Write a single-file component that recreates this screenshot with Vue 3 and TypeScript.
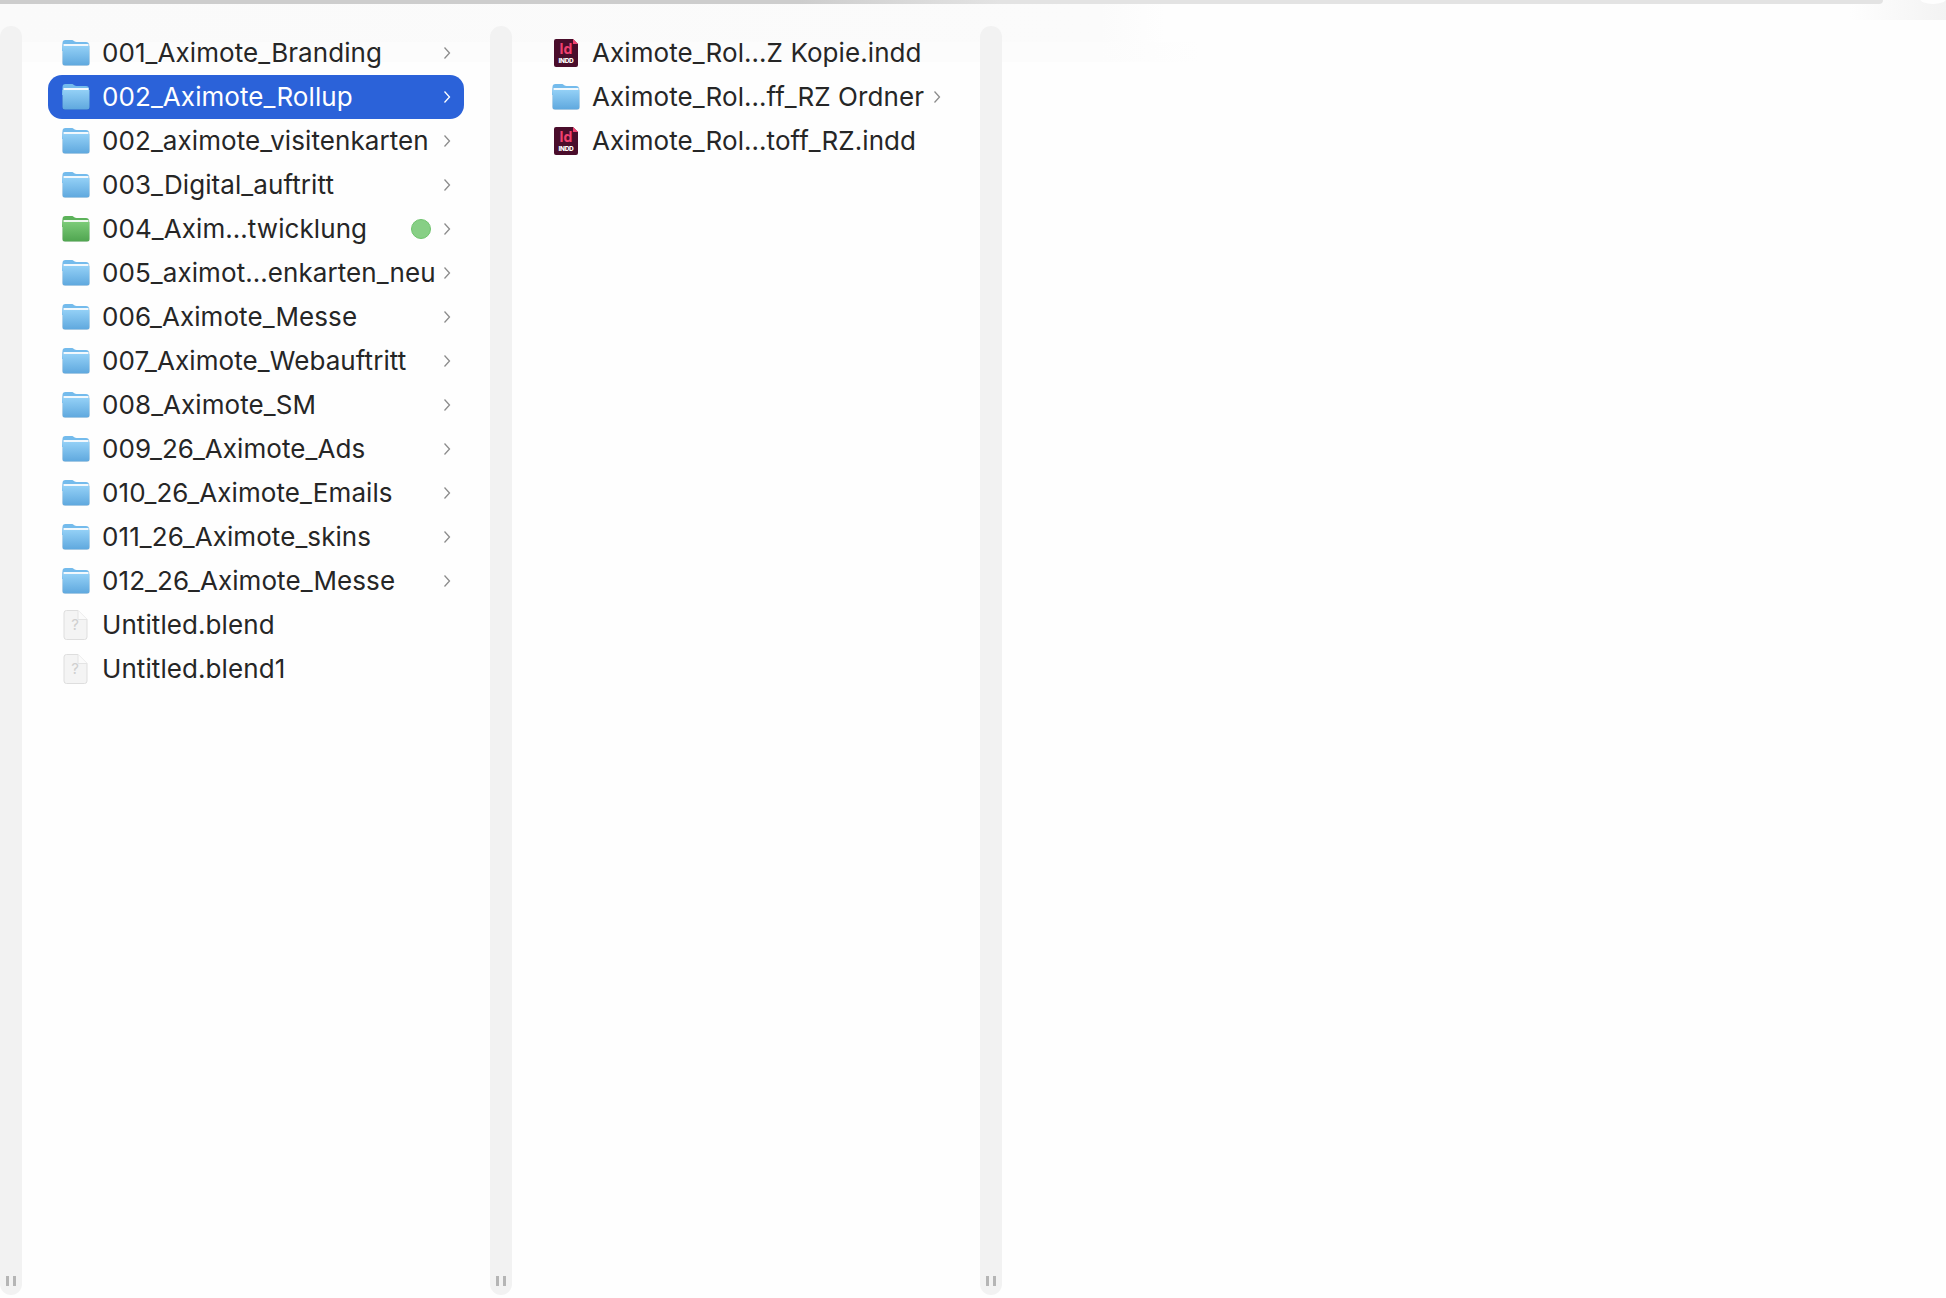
<template>
  <div class="finder">
    <div class="top-edge" />
    <div class="top-corner" />
    <div class="columns">
      <section v-for="(col, i) in columns" :key="i" class="column">
        <div class="gutter">
          <span class="grip" />
          <span class="grip" />
        </div>
        <ul class="list">
          <li v-for="item in col" :key="item.name" class="row" :class="{ selected: item.selected }">
            <span class="icon">
              <svg v-if="item.kind === 'folder' || item.kind === 'green'" width="30" height="28" viewBox="0 0 30 28">
                <defs>
                  <linearGradient id="blueBody" x1="0" y1="0" x2="0" y2="1">
                    <stop offset="0" stop-color="#93d0f6" />
                    <stop offset="1" stop-color="#5fa8de" />
                  </linearGradient>
                  <linearGradient id="greenBody" x1="0" y1="0" x2="0" y2="1">
                    <stop offset="0" stop-color="#7ccb78" />
                    <stop offset="1" stop-color="#4fa550" />
                  </linearGradient>
                </defs>
                <rect x="1" y="4" width="28" height="23" rx="3" fill="#000" opacity="0.08" />
                <path
                  d="M1.500 4C1.500 2 2.500 1 4.500 1h6c1.200 0 1.800.4 2.600 1.100.7.600 1.300.9 2.400.9h9.500c2 0 3 1 3 3v6h-27z"
                  :fill="item.kind === 'green' ? '#5cb25a' : '#74bbec'"
                />
                <rect x="2.500" y="5" width="25" height="2" fill="#fff" opacity="0.9" />
                <path
                  d="M1.500 7h27v17a2.500 2.500 0 0 1-2.500 2.500H4A2.500 2.500 0 0 1 1.500 24z"
                  :fill="item.kind === 'green' ? 'url(#greenBody)' : 'url(#blueBody)'"
                />
              </svg>
              <svg v-else-if="item.kind === 'indd'" width="26" height="30" viewBox="0 0 26 30">
                <path d="M3 1h17l5 5v21a2 2 0 0 1-2 2H3a2 2 0 0 1-2-2V3a2 2 0 0 1 2-2z" fill="#4a0d2b" />
                <path d="M20 1l5 5h-5z" fill="#f0406f" />
                <text x="13" y="16" class="id-mark">Id</text>
                <text x="13" y="25" class="id-type">INDD</text>
              </svg>
              <svg v-else width="26" height="32" viewBox="0 0 26 32">
                <path
                  d="M3.500 1.500H15l9 9V28a2.500 2.500 0 0 1-2.500 2.500h-18A2.500 2.500 0 0 1 1 28V4a2.500 2.500 0 0 1 2.500-2.500z"
                  fill="#f4f4f4"
                  stroke="#dedede"
                />
                <path d="M15 1.500v9h9" fill="#fbfbfb" stroke="#e4e4e4" />
                <text x="12" y="21" class="doc-mark">?</text>
              </svg>
            </span>
            <span class="name">{{ item.name }}</span>
            <span v-if="item.kind === 'green'" class="tag" />
            <svg v-if="item.kind === 'folder' || item.kind === 'green'" class="chevron" width="8" height="14" viewBox="0 0 8 14">
              <path d="M1.500 1.500 6.500 7l-5 5.500" fill="none" stroke="currentColor" stroke-width="1.300" />
            </svg>
          </li>
        </ul>
      </section>
    </div>
  </div>
</template>

<script setup lang="ts">
interface Item {
  name: string
  kind: 'folder' | 'green' | 'indd' | 'doc'
  selected?: boolean
}

const columns: Item[][] = [
  [
    { name: '001_Aximote_Branding', kind: 'folder' },
    { name: '002_Aximote_Rollup', kind: 'folder', selected: true },
    { name: '002_aximote_visitenkarten', kind: 'folder' },
    { name: '003_Digital_auftritt', kind: 'folder' },
    { name: '004_Axim…twicklung', kind: 'green' },
    { name: '005_aximot…enkarten_neu', kind: 'folder' },
    { name: '006_Aximote_Messe', kind: 'folder' },
    { name: '007_Aximote_Webauftritt', kind: 'folder' },
    { name: '008_Aximote_SM', kind: 'folder' },
    { name: '009_26_Aximote_Ads', kind: 'folder' },
    { name: '010_26_Aximote_Emails', kind: 'folder' },
    { name: '011_26_Aximote_skins', kind: 'folder' },
    { name: '012_26_Aximote_Messe', kind: 'folder' },
    { name: 'Untitled.blend', kind: 'doc' },
    { name: 'Untitled.blend1', kind: 'doc' },
  ],
  [
    { name: 'Aximote_Rol…Z Kopie.indd', kind: 'indd' },
    { name: 'Aximote_Rol…ff_RZ Ordner', kind: 'folder' },
    { name: 'Aximote_Rol…toff_RZ.indd', kind: 'indd' },
  ],
  [],
]
</script>

<style scoped>
.finder {
  position: relative;
  width: 1946px;
  height: 1298px;
  overflow: hidden;
  /* faint wash left behind under the title area */
  background:
    linear-gradient(to right, #fafafa 0, #fbfbfb 1100px, #fefefe 1165px) 0 4px / 100% 38px no-repeat,
    linear-gradient(to right, #fcfcfc 0, #fcfcfc 1100px, #fefefe 1200px) 0 42px / 100% 20px no-repeat,
    #fefefe;
  font-family: Inter, 'Liberation Sans', sans-serif;
}

.top-edge {
  position: relative;
  z-index: 1;
  height: 4px;
  width: 1883px;
  border-radius: 0 0 8px 0;
  background: linear-gradient(to right, #cdcdcd 0, #cdcdcd 800px, #e3e3e3 1000px, #e3e3e3 100%);
}

.top-corner {
  position: absolute;
  top: 0;
  right: 0;
  width: 96px;
  height: 20px;
  overflow: hidden;
  background: linear-gradient(to right, #fefefe, #f3f3f3);
}

.top-corner::after {
  content: '';
  position: absolute;
  top: -6px;
  right: 0;
  width: 26px;
  height: 10px;
  border-radius: 50%;
  background: #fefefe;
}

.columns {
  display: flex;
}

.column {
  display: flex;
  width: 490px;
  flex-shrink: 0;
  height: 1291px;
  padding-top: 22px;
  box-sizing: border-box;
}

.column:last-child {
  flex: 1;
}

.gutter {
  display: flex;
  flex-shrink: 0;
  align-items: flex-end;
  justify-content: center;
  gap: 4.500px;
  width: 22px;
  height: 100%;
  padding-bottom: 9px;
  box-sizing: border-box;
  border-radius: 11px;
  background: #f2f2f2;
}

.grip {
  width: 2.500px;
  height: 10px;
  background: #b5b5b5;
}

.list {
  list-style: none;
  margin: 0;
  padding: 5px 0 0 26px;
  width: 416px;
}

.row {
  display: flex;
  align-items: center;
  height: 44px;
  padding: 0 13px;
  border-radius: 14px;
  color: #262626;
  font-size: 26px;
  letter-spacing: 0.08px;
}

.row.selected {
  background: #2b62d9;
  color: #fff;
}

.icon {
  display: flex;
  align-items: center;
  justify-content: center;
  flex-shrink: 0;
  width: 30px;
  height: 44px;
  margin-right: 11px;
}

.name {
  flex: 1;
  padding-bottom: 2px;
  white-space: nowrap;
}

.tag {
  width: 20px;
  height: 20px;
  margin-right: 10px;
  border-radius: 50%;
  box-sizing: border-box;
  background: #87cf85;
  border: 1px solid #6fc46d;
}

.chevron {
  flex-shrink: 0;
  margin-left: 2px;
  color: #8c8c8c;
}

.selected .chevron {
  color: #fff;
}

.id-mark {
  font: 700 14px Inter, sans-serif;
  fill: #f0406f;
  text-anchor: middle;
}

.id-type {
  font: 800 6.500px Inter, sans-serif;
  letter-spacing: -0.3px;
  fill: #fff;
  text-anchor: middle;
}

.doc-mark {
  font: 400 15px Inter, sans-serif;
  fill: #cfcfcf;
  text-anchor: middle;
}
</style>
